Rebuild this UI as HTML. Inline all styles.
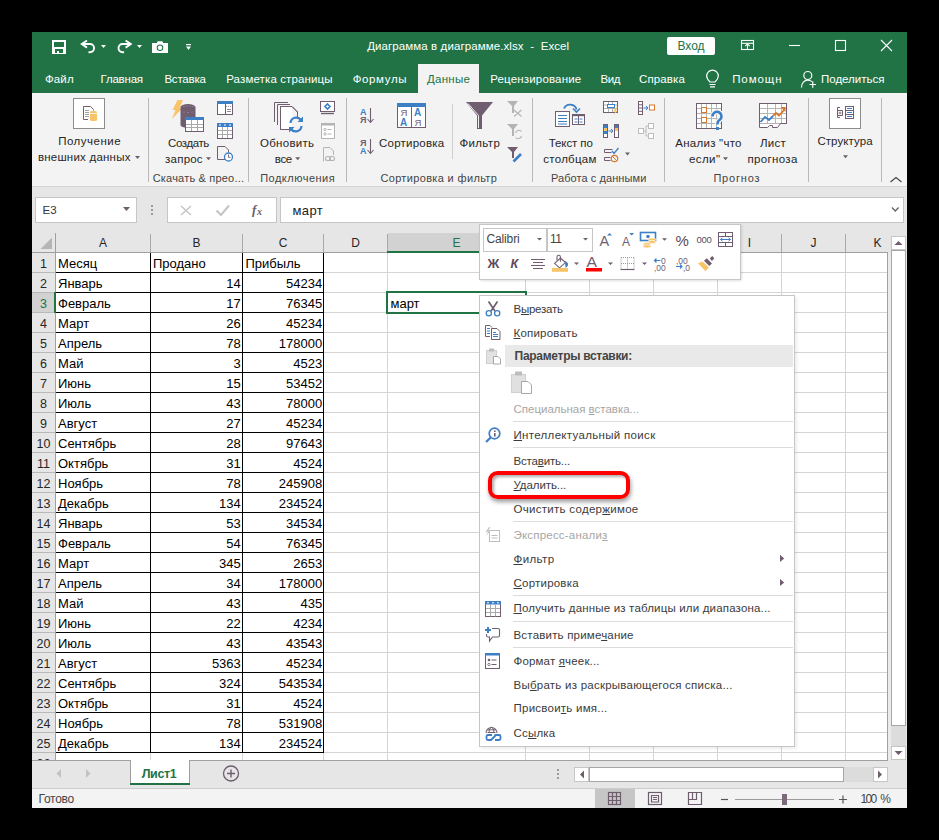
<!DOCTYPE html>
<html><head><meta charset="utf-8">
<style>
*{margin:0;padding:0;box-sizing:border-box}
html,body{width:939px;height:840px;overflow:hidden;background:#000;font-family:"Liberation Sans",sans-serif}
.a{position:absolute}
.t{position:absolute;white-space:nowrap;line-height:1}
svg{position:absolute;overflow:visible}
</style></head><body>
<div class="a" style="left:32px;top:32px;width:875px;height:776px;background:#e6e6e6;"></div>
<div class="a" style="left:32px;top:32px;width:875px;height:61px;background:#217346;"></div>
<svg style="left:0;top:0" width="939" height="100">
<rect x="52" y="40" width="14" height="14" fill="#fff"/>
<rect x="54" y="42" width="10" height="5" fill="#217346"/>
<rect x="55" y="49" width="8" height="4" fill="#217346"/>
<rect x="57" y="51" width="2" height="2" fill="#fff"/>
<g fill="none" stroke="#fff" stroke-width="1.9">
 <path d="M82 44 H90 a4.1 4.1 0 0 1 0 8.2 H88.5"/>
 <path d="M87 40.5 L81.8 44 L87 47.6"/>
 <path d="M130.6 44 H122.6 a4.1 4.1 0 0 0 0 8.2 H124.1"/>
 <path d="M125.6 40.5 L130.8 44 L125.6 47.6"/>
</g>
<g fill="#fff">
 <path d="M101 45 h5 l-2.5 3z"/>
 <path d="M137 45 h5 l-2.5 3z"/>
 <path d="M152 43 h5 l0.5 -1.8 h5 l0.5 1.8 h5 v10 h-16z"/>
 <circle cx="160" cy="47.8" r="3.3" fill="#217346"/>
 <circle cx="160" cy="47.8" r="2.2"/>
 <rect x="186" y="44" width="5" height="1.2"/>
 <path d="M186 46.5 h5 l-2.5 3.5z"/>
</g>
<!-- window controls -->
<g fill="none" stroke="#fff" stroke-width="1.1">
 <rect x="741.5" y="40.5" width="12" height="9"/>
 <path d="M741.5 43.3 h12"/>
 <path d="M747.5 49.5 v-6 M745.2 46.2 l2.3 -2.3 l2.3 2.3"/>
 <path d="M789 45.5 h11"/>
 <rect x="835.5" y="40.5" width="10" height="10"/>
 <path d="M881 40 l11 11 M892 40 l-11 11"/>
</g>
</svg>
<div class="t" style="left:367.2px;top:41.27px;font-size:11.5px;color:#ffffff;font-weight:400;letter-spacing:0.092px;">Диаграмма в диаграмме.xlsx&nbsp; - &nbsp;Excel</div>
<div class="a" style="left:667px;top:36.5px;width:48px;height:18.5px;background:#fff;border-radius:2px"></div>
<div class="t" style="left:491px;width:400px;text-align:center;top:39.84px;font-size:12px;color:#217346;font-weight:400;">Вход</div>
<div class="a" style="left:418px;top:64px;width:61px;height:29px;background:#f3f3f3;"></div>
<div class="t" style="left:45px;top:73.87px;font-size:11.5px;color:#ffffff;font-weight:400;letter-spacing:0.106px;">Файл</div>
<div class="t" style="left:100.5px;top:73.87px;font-size:11.5px;color:#ffffff;font-weight:400;letter-spacing:-0.197px;">Главная</div>
<div class="t" style="left:164.4px;top:73.87px;font-size:11.5px;color:#ffffff;font-weight:400;letter-spacing:-0.192px;">Вставка</div>
<div class="t" style="left:226.2px;top:73.87px;font-size:11.5px;color:#ffffff;font-weight:400;letter-spacing:0.129px;">Разметка страницы</div>
<div class="t" style="left:352.7px;top:73.87px;font-size:11.5px;color:#ffffff;font-weight:400;letter-spacing:0.626px;">Формулы</div>
<div class="t" style="left:490.2px;top:73.87px;font-size:11.5px;color:#ffffff;font-weight:400;letter-spacing:0.168px;">Рецензирование</div>
<div class="t" style="left:600.4px;top:73.87px;font-size:11.5px;color:#ffffff;font-weight:400;letter-spacing:-0.356px;">Вид</div>
<div class="t" style="left:639px;top:73.87px;font-size:11.5px;color:#ffffff;font-weight:400;letter-spacing:0.112px;">Справка</div>
<div class="t" style="left:732.2px;top:73.87px;font-size:11.5px;color:#ffffff;font-weight:400;letter-spacing:0.904px;">Помощн</div>
<div class="t" style="left:821px;top:73.87px;font-size:11.5px;color:#ffffff;font-weight:400;letter-spacing:-0.002px;">Поделиться</div>
<div class="t" style="left:426.9px;top:73.87px;font-size:11.5px;color:#217346;font-weight:400;letter-spacing:0.308px;">Данные</div>
<svg style="left:0;top:0" width="939" height="100">
<g fill="none" stroke="#fff" stroke-width="1.2">
 <path d="M709.5 84.5 h6 M710 86.8 h5 M710 82 c-2.5-2.5-3.3-4-3.3-6 a5.8 5.8 0 0 1 11.6 0 c0 2-0.8 3.5-3.3 6z"/>
 <circle cx="807.8" cy="75.5" r="4"/>
 <path d="M801.5 87.5 c0-4.5 2.8-7.3 6.3-7.3 c1.8 0 3 0.6 4 1.4"/>
 <path d="M809.5 84.5 h6.5 M812.75 81.2 v6.6"/>
</g>
</svg>
<div class="a" style="left:32px;top:93px;width:875px;height:93px;background:#f3f3f3;"></div>
<div class="a" style="left:32px;top:186px;width:875px;height:1px;background:#d4d4d4;"></div>
<div class="a" style="left:148px;top:98px;width:1px;height:84px;background:#b9b9b9;"></div>
<div class="a" style="left:248px;top:98px;width:1px;height:84px;background:#b9b9b9;"></div>
<div class="a" style="left:346px;top:98px;width:1px;height:84px;background:#b9b9b9;"></div>
<div class="a" style="left:532px;top:98px;width:1px;height:84px;background:#b9b9b9;"></div>
<div class="a" style="left:664px;top:98px;width:1px;height:84px;background:#b9b9b9;"></div>
<div class="a" style="left:808px;top:98px;width:1px;height:84px;background:#b9b9b9;"></div>
<div class="a" style="left:881px;top:98px;width:1px;height:84px;background:#b9b9b9;"></div>
<div class="a" style="left:452px;top:104px;width:1px;height:55px;background:#cfcfcf;"></div>
<div class="t" style="left:58.2px;top:136.17px;font-size:11.5px;color:#262626;font-weight:400;letter-spacing:0.495px;">Получение</div>
<div class="t" style="left:37.9px;top:152.17px;font-size:11.5px;color:#262626;font-weight:400;letter-spacing:0.221px;">внешних данных</div>
<div class="t" style="left:168px;top:138.17px;font-size:11.5px;color:#262626;font-weight:400;letter-spacing:-0.403px;">Создать</div>
<div class="t" style="left:165.1px;top:154.17px;font-size:11.5px;color:#262626;font-weight:400;letter-spacing:0.212px;">запрос</div>
<div class="t" style="left:260px;top:137.87px;font-size:11.5px;color:#262626;font-weight:400;letter-spacing:0.275px;">Обновить</div>
<div class="t" style="left:274.8px;top:153.67px;font-size:11.5px;color:#262626;font-weight:400;letter-spacing:-0.370px;">все</div>
<div class="t" style="left:379px;top:137.87px;font-size:11.5px;color:#262626;font-weight:400;letter-spacing:0.231px;">Сортировка</div>
<div class="t" style="left:459.5px;top:137.67px;font-size:11.5px;color:#262626;font-weight:400;letter-spacing:0.332px;">Фильтр</div>
<div class="t" style="left:548.8px;top:137.67px;font-size:11.5px;color:#262626;font-weight:400;letter-spacing:-0.112px;">Текст по</div>
<div class="t" style="left:543.3px;top:153.67px;font-size:11.5px;color:#262626;font-weight:400;letter-spacing:0.269px;">столбцам</div>
<div class="t" style="left:675.3px;top:137.87px;font-size:11.5px;color:#262626;font-weight:400;letter-spacing:0.256px;">Анализ &quot;что</div>
<div class="t" style="left:689px;top:153.67px;font-size:11.5px;color:#262626;font-weight:400;letter-spacing:0.406px;">если&quot;</div>
<div class="t" style="left:760px;top:137.87px;font-size:11.5px;color:#262626;font-weight:400;letter-spacing:0.267px;">Лист</div>
<div class="t" style="left:747.4px;top:153.67px;font-size:11.5px;color:#262626;font-weight:400;letter-spacing:0.357px;">прогноза</div>
<div class="t" style="left:817.4px;top:136.17px;font-size:11.5px;color:#262626;font-weight:400;letter-spacing:0.080px;">Структура</div>
<div class="t" style="left:152.7px;top:173.19px;font-size:11px;color:#444;font-weight:400;letter-spacing:0.195px;">Скачать &amp; прео...</div>
<div class="t" style="left:260.2px;top:173.19px;font-size:11px;color:#444;font-weight:400;letter-spacing:0.491px;">Подключения</div>
<div class="t" style="left:380.4px;top:173.19px;font-size:11px;color:#444;font-weight:400;letter-spacing:0.345px;">Сортировка и фильтр</div>
<div class="t" style="left:550.9px;top:173.19px;font-size:11px;color:#444;font-weight:400;letter-spacing:0.079px;">Работа с данными</div>
<div class="t" style="left:713.4px;top:173.19px;font-size:11px;color:#444;font-weight:400;letter-spacing:0.803px;">Прогноз</div>
<svg style="left:0;top:0" width="939" height="200"><path d="M135 156 h5 l-2.5 3z" fill="#6d5d6d"/><path d="M206 157.3 h5 l-2.5 3z" fill="#6d5d6d"/><path d="M295.2 157.3 h5 l-2.5 3z" fill="#6d5d6d"/><path d="M723 157.3 h5 l-2.5 3z" fill="#6d5d6d"/><path d="M843 155.2 h5 l-2.5 3z" fill="#6d5d6d"/><path d="M625 152.5 h5 l-2.5 3z" fill="#6d5d6d"/><path d="M890.5 182 l5.5 -4.5 l5.5 4.5" fill="none" stroke="#444" stroke-width="1.1"/><rect x="73.5" y="98.5" width="31" height="30" fill="#fff" stroke="#8c8c8c"/><path d="M83.5 119.5 V106.5 H90.5 L93.5 109.5 V110.5" fill="none" stroke="#705e70" stroke-width="1"/><path d="M83.5 119.5 H88" stroke="#705e70"/><g stroke="#a0a0a0" stroke-width="1"><path d="M85 110.5h4M85 112.5h4M85 114.5h4M85 116.5h4"/></g><rect x="90" y="111" width="7" height="10" rx="1.5" fill="#f7c46a"/><path d="M90 113.5 h7" stroke="#fff" stroke-width="0.8"/><path d="M177.5 100 H183 L179.5 108 H182.5 L172 119 L175.5 110 H172.5z" fill="#f7c46a"/><path d="M180.5 107 a7.5 3 0 0 1 15 0 V125 a7.5 3 0 0 1 -15 0z" fill="#705e70"/><g fill="#a99aa9"><circle cx="184" cy="106.5" r="0.6"/><circle cx="187" cy="106" r="0.6"/><circle cx="190" cy="106" r="0.6"/><circle cx="193" cy="106.5" r="0.6"/><circle cx="184" cy="112" r="0.6"/><circle cx="188" cy="112.5" r="0.6"/><circle cx="192" cy="112" r="0.6"/></g><rect x="185.5" y="117.5" width="18" height="14" fill="#fff" stroke="#705e70"/><rect x="185" y="117" width="19" height="3" fill="#3c7fc4"/><path d="M186 124.5 h17 M186 127.5 h17 M191.5 120 v11 M197.5 120 v11" stroke="#a9a9a9" stroke-width="1"/><rect x="217.5" y="101.5" width="15" height="13" fill="#fff" stroke="#705e70"/><rect x="217" y="101" width="16" height="3" fill="#3c7fc4"/><path d="M225.5 104 v10.5 M218 114.5 h7.5" stroke="#705e70"/><path d="M227 109.5 h4 M227 111.5 h4" stroke="#8a8a8a"/><path d="M226 106.5 h6" stroke="#9a9a9a" stroke-dasharray="1 1"/><rect x="217.5" y="123.5" width="15" height="15" fill="#fff" stroke="#705e70"/><rect x="217" y="123" width="16" height="4" fill="#3c7fc4"/><path d="M218 130.5 h14 M218 134.5 h14 M222.5 127 v11 M227.5 127 v11" stroke="#a9a9a9"/><path d="M219 125 h2 M224 125 h2 M229 125 h2" stroke="#fff"/><path d="M226.5 159.5 H217.5 V146.5 H225 L228.5 150 V152" fill="none" stroke="#705e70"/><circle cx="228.5" cy="157" r="4" fill="#fff" stroke="#3c7fc4" stroke-width="1.3"/><path d="M228.5 154.5 v2.8 h2" fill="none" stroke="#705e70" stroke-width="0.9"/><path d="M274.5 122 V102.5 H288 M277.5 125 V104.5 H290 M280.5 129.5 V106.5 H292 L297.5 112 V117" fill="none" stroke="#705e70"/><path d="M280.5 129.5 H289" stroke="#705e70"/><rect x="281" y="107" width="11" height="22" fill="#fff"/><path d="M280.5 129.5 V106.5 H292 L297.5 112 V117 M280.5 129.5 H289" fill="none" stroke="#705e70"/><g fill="none" stroke="#3c7fc4" stroke-width="2.2"><path d="M290.5 123 a5.8 5.8 0 0 1 10.5 -3"/><path d="M301.5 126 a5.8 5.8 0 0 1 -10.5 3"/></g><path d="M303 116.5 v5.5 h-5.5z M289 132.5 v-5.5 h5.5z" fill="#3c7fc4"/><rect x="320.5" y="101.5" width="14" height="10" fill="#fff" stroke="#705e70"/><path d="M321 113.5 h13" stroke="#705e70" stroke-width="1.4"/><path d="M327.5 104 l2.5 2.5 l-2.5 2.5 l-2.5 -2.5z" fill="none" stroke="#3c7fc4" stroke-width="1.6"/><rect x="321.5" y="123.5" width="13" height="15" fill="#fff" stroke="#b4b4b4"/><rect x="321" y="123" width="14" height="2.5" fill="#b4b4b4"/><g stroke="#b4b4b4" fill="none"><circle cx="325" cy="129.5" r="1.2"/><circle cx="325" cy="134" r="1.2"/><path d="M327.5 129.5h4 M327.5 134h4"/></g><path d="M323.5 161.5 V147.5 H330 L333.5 151 V155" fill="none" stroke="#b4b4b4"/><rect x="325.5" y="156.5" width="5" height="4" rx="2" fill="#f3f3f3" stroke="#b4b4b4" stroke-width="1.1"/><rect x="329.5" y="156.5" width="5" height="4" rx="2" fill="none" stroke="#b4b4b4" stroke-width="1.1"/><text x="360" y="115" font-family="Liberation Sans" font-weight="700" font-size="9" fill="#3c7fc4">A</text><text x="360" y="122.5" font-family="Liberation Sans" font-weight="700" font-size="9" fill="#705e70">Я</text><path d="M370.5 108 v14.5 M367.5 119 l3 3.5 l3 -3.5" fill="none" stroke="#705e70" stroke-width="1.1"/><text x="360" y="146" font-family="Liberation Sans" font-weight="700" font-size="9" fill="#705e70">Я</text><text x="360" y="153.5" font-family="Liberation Sans" font-weight="700" font-size="9" fill="#3c7fc4">A</text><path d="M370.5 139 v14.5 M367.5 150 l3 3.5 l3 -3.5" fill="none" stroke="#705e70" stroke-width="1.1"/><rect x="397.5" y="103.5" width="28" height="24" fill="#fff" stroke="#705e70"/><rect x="397" y="103" width="29" height="4" fill="#3c7fc4"/><path d="M411.5 107 v20.5" stroke="#705e70"/><text x="400.5" y="116" font-family="Liberation Sans" font-size="9.5" fill="#705e70">Я</text><text x="400" y="126" font-family="Liberation Sans" font-weight="700" font-size="10" fill="#3c7fc4">A</text><text x="414" y="116" font-family="Liberation Sans" font-weight="700" font-size="10" fill="#3c7fc4">A</text><text x="414.5" y="126" font-family="Liberation Sans" font-size="9.5" fill="#705e70">Я</text><path d="M466 102 H493 L482 115.5 V129 H477 V115.5z" fill="#705e70"/><path d="M468 103.5 L478.5 115.5 V128" fill="none" stroke="#fff" stroke-width="0.9"/><path d="M507 101 H518 L514 106 V113 H512 V106z" fill="#b4b4b4"/><path d="M514 110 l7.5 6.5 M521.5 110 l-7.5 6.5" stroke="#b4b4b4" stroke-width="1.1"/><path d="M507 124 H518 L514 129 V136 H512 V129z" fill="#b4b4b4"/><path d="M515.5 133 a3.5 3.5 0 0 1 6 -1.5 M521.5 136 a3.5 3.5 0 0 1 -6 1.5" fill="none" stroke="#b4b4b4" stroke-width="1.1"/><path d="M507 147 H518 L514 152 V158 H512 V152z" fill="#705e70"/><path d="M513.5 161.5 L521 154" stroke="#3c7fc4" stroke-width="2.6"/><rect x="555.5" y="111.5" width="14" height="15" fill="#fff" stroke="#705e70"/><path d="M558 115.5h9 M558 118.5h9 M558 121.5h9 M558 124h9" stroke="#3c7fc4"/><rect x="572.5" y="114.5" width="12" height="10" fill="#fff" stroke="#705e70"/><rect x="572" y="114" width="13" height="2.2" fill="#705e70"/><path d="M574.5 119h3 M579.5 119h3 M574.5 122h3 M579.5 122h3" stroke="#3c7fc4"/><path d="M578.5 116 v8.5" stroke="#705e70"/><path d="M564 108.5 a6.5 6 0 0 1 12.5 1" fill="none" stroke="#3c7fc4" stroke-width="1.8"/><path d="M573 108.5 l3.5 3.5 l3.5 -3.5" fill="none" stroke="#3c7fc4" stroke-width="1.6"/><rect x="603.5" y="101.5" width="14" height="11" fill="#fff" stroke="#705e70"/><path d="M604 105h13 M604 108.5h13 M608.5 102v10 M612.5 102v10" stroke="#b0b0b0"/><rect x="607.5" y="104.5" width="7" height="3" fill="#fff" stroke="#3c7fc4"/><path d="M616 107 l-3 4.5 h2.5 l-2.5 4 l5 -5 h-2.5 l2.5 -3.5z" fill="#f7c46a"/><rect x="603.5" y="124.5" width="4" height="13" fill="#fff" stroke="#705e70"/><rect x="614.5" y="124.5" width="4" height="13" fill="#fff" stroke="#705e70"/><rect x="604" y="125" width="3" height="3" fill="#3c7fc4"/><rect x="604" y="128" width="3" height="3" fill="#f7c46a"/><rect x="604" y="131" width="3" height="3" fill="#3c7fc4"/><rect x="615" y="125" width="3" height="3" fill="#3c7fc4"/><rect x="615" y="128" width="3" height="3" fill="#f7c46a"/><path d="M608.5 131 h4 M611 129 l2 2 l-2 2" fill="none" stroke="#3c7fc4"/><path d="M604.5 149.5 h8 M604.5 152.5 h7 M604.5 157.5 h6 M604.5 160.5 h6" stroke="#705e70"/><path d="M604.5 149.5 v3 M604.5 157.5 v3" stroke="#705e70"/><path d="M612 151 l2 2.5 l4.5 -5.5" fill="none" stroke="#3c7fc4" stroke-width="1.3"/><circle cx="614.5" cy="158.5" r="3.2" fill="none" stroke="#d9782c" stroke-width="1.2"/><path d="M612.5 156.5 l4 4" stroke="#d9782c"/><rect x="638.5" y="101.5" width="4" height="13" fill="#fff" stroke="#705e70"/><path d="M639 104.8h3 M639 108h3 M639 111.3h3" stroke="#705e70"/><path d="M643.5 108 h4 M646 106 l2 2 l-2 2" fill="none" stroke="#3c7fc4"/><rect x="649.5" y="105" width="5" height="5" fill="#fff" stroke="#d9782c"/><g fill="#fff" stroke="#bdbdbd"><rect x="638.5" y="128.5" width="5" height="5"/><rect x="648.5" y="123.5" width="5" height="5"/><rect x="648.5" y="133.5" width="5" height="5"/></g><path d="M643.5 131 h2.5 v-5 h2.5 M646 131 v5 h2.5" fill="none" stroke="#bdbdbd"/><rect x="696.5" y="103.5" width="25" height="25" fill="#fff" stroke="#705e70"/><path d="M697 108.5h24 M697 113.5h24 M697 118.5h24 M697 123.5h24 M701.5 104v24 M706.5 104v24 M711.5 104v24 M716.5 104v24" stroke="#b5b5b5"/><rect x="701.5" y="107.5" width="5" height="5" fill="#fff" stroke="#d9782c"/><rect x="701.5" y="117.5" width="5" height="5" fill="#fff" stroke="#d9782c"/><path d="M712.5 116.5 a4.5 4.5 0 1 1 7 3.5 c-1.5 1 -2 2 -2 3.5 v1" fill="none" stroke="#f3f3f3" stroke-width="5"/><path d="M712.5 116.5 a4.5 4.5 0 1 1 7 3.5 c-1.5 1 -2 2 -2 3.5 v1" fill="none" stroke="#3c7fc4" stroke-width="2.6"/><rect x="716" y="127" width="3" height="3" fill="#3c7fc4"/><rect x="759.5" y="103.5" width="27" height="20" fill="#fff" stroke="#705e70"/><path d="M760 108.5h26 M760 113.5h26 M760 118.5h26 M767.5 104v19 M775.5 104v19 M781.5 104v19" stroke="#b5b5b5"/><path d="M759.5 123.5 v4 h8 l2 -2 h3 v2 h5 l3 -4" fill="#fff" stroke="#705e70"/><path d="M760.5 122 l4.5 -5 l4 3 l4 -4" fill="none" stroke="#3c7fc4" stroke-width="1.8"/><path d="M773 116 l3 -3 l3 2.5 l5.5 -6" fill="none" stroke="#d9782c" stroke-width="1.8"/><path d="M780.5 107 h5 v5z" fill="#d9782c"/><rect x="829.5" y="98.5" width="31" height="30" fill="#fff" stroke="#8c8c8c"/><path d="M840 107.5 h-2.5 v10 h2.5 M837.5 110.5 h5 v5 h-5" fill="none" stroke="#705e70"/><path d="M838.5 113 h3 M840 111.5 v3" stroke="#705e70" stroke-width="0.8"/><rect x="845.5" y="106.5" width="8" height="12" fill="#fff" stroke="#705e70"/><path d="M846 110.5h7 M846 114.5h7" stroke="#705e70"/><path d="M847 108.5h5 M847 112.5h5 M847 116.5h5" stroke="#3c7fc4"/></svg>
<div class="a" style="left:35px;top:197px;width:102px;height:26px;background:#fff;border:1px solid #c6c6c6"></div>
<div class="t" style="left:42.6px;top:204.97px;font-size:11.5px;color:#333;font-weight:400;">E3</div>
<svg style="left:0;top:0" width="939" height="300"><path d="M123 207 h7 l-3.5 4z" fill="#6d5d6d"/><g fill="#9a9a9a"><rect x="151" y="205" width="2" height="2"/><rect x="151" y="209" width="2" height="2"/><rect x="151" y="213" width="2" height="2"/></g></svg>
<div class="a" style="left:167px;top:197px;width:110px;height:26px;background:#fff;border:1px solid #c6c6c6"></div>
<div class="a" style="left:280px;top:197px;width:624px;height:26px;background:#fff;border:1px solid #c6c6c6"></div>
<div class="t" style="left:292.5px;top:204.00px;font-size:13px;color:#222;font-weight:400;letter-spacing:0.407px;">март</div>
<svg style="left:0;top:0" width="939" height="300"><path d="M181 206 l10 9 M191 206 l-10 9" stroke="#c4c4c4" stroke-width="1.4"/><path d="M216.5 210.5 l4.5 4.5 l8 -9.5" fill="none" stroke="#c4c4c4" stroke-width="2"/><text x="252" y="214" font-family="Liberation Serif" font-style="italic" font-weight="700" font-size="13" fill="#6d5d6d">f</text><text x="257" y="214.5" font-family="Liberation Serif" font-style="italic" font-weight="700" font-size="10" fill="#6d5d6d">x</text></svg>
<svg style="left:0;top:0" width="939" height="300"><path d="M892 207.5 l3.3 3.5 l3.3 -3.5" fill="none" stroke="#6d5d6d" stroke-width="1.3"/></svg>
<div class="a" style="left:32px;top:233px;width:856px;height:20px;background:#e6e6e6;"></div>
<div class="a" style="left:32px;top:253px;width:23px;height:507px;background:#e6e6e6;"></div>
<div class="a" style="left:56px;top:253px;width:831px;height:507px;background:#fff;"></div>
<div class="a" style="left:388px;top:233px;width:137px;height:19px;background:#d2d2d2;"></div>
<div class="a" style="left:32px;top:293px;width:23px;height:19px;background:#d2d2d2;"></div>
<svg style="left:0;top:0" width="939" height="840"><path d="M52 237.5 V249 H40.5z" fill="#b5b5b5"/></svg>
<div class="a" style="left:56px;top:272px;width:831px;height:1px;background:#d4d4d4;"></div>
<div class="a" style="left:32px;top:272px;width:23px;height:1px;background:#b8b8b8;"></div>
<div class="a" style="left:56px;top:292px;width:831px;height:1px;background:#d4d4d4;"></div>
<div class="a" style="left:32px;top:292px;width:23px;height:1px;background:#b8b8b8;"></div>
<div class="a" style="left:56px;top:312px;width:831px;height:1px;background:#d4d4d4;"></div>
<div class="a" style="left:32px;top:312px;width:23px;height:1px;background:#b8b8b8;"></div>
<div class="a" style="left:56px;top:332px;width:831px;height:1px;background:#d4d4d4;"></div>
<div class="a" style="left:32px;top:332px;width:23px;height:1px;background:#b8b8b8;"></div>
<div class="a" style="left:56px;top:352px;width:831px;height:1px;background:#d4d4d4;"></div>
<div class="a" style="left:32px;top:352px;width:23px;height:1px;background:#b8b8b8;"></div>
<div class="a" style="left:56px;top:372px;width:831px;height:1px;background:#d4d4d4;"></div>
<div class="a" style="left:32px;top:372px;width:23px;height:1px;background:#b8b8b8;"></div>
<div class="a" style="left:56px;top:392px;width:831px;height:1px;background:#d4d4d4;"></div>
<div class="a" style="left:32px;top:392px;width:23px;height:1px;background:#b8b8b8;"></div>
<div class="a" style="left:56px;top:412px;width:831px;height:1px;background:#d4d4d4;"></div>
<div class="a" style="left:32px;top:412px;width:23px;height:1px;background:#b8b8b8;"></div>
<div class="a" style="left:56px;top:432px;width:831px;height:1px;background:#d4d4d4;"></div>
<div class="a" style="left:32px;top:432px;width:23px;height:1px;background:#b8b8b8;"></div>
<div class="a" style="left:56px;top:452px;width:831px;height:1px;background:#d4d4d4;"></div>
<div class="a" style="left:32px;top:452px;width:23px;height:1px;background:#b8b8b8;"></div>
<div class="a" style="left:56px;top:472px;width:831px;height:1px;background:#d4d4d4;"></div>
<div class="a" style="left:32px;top:472px;width:23px;height:1px;background:#b8b8b8;"></div>
<div class="a" style="left:56px;top:492px;width:831px;height:1px;background:#d4d4d4;"></div>
<div class="a" style="left:32px;top:492px;width:23px;height:1px;background:#b8b8b8;"></div>
<div class="a" style="left:56px;top:512px;width:831px;height:1px;background:#d4d4d4;"></div>
<div class="a" style="left:32px;top:512px;width:23px;height:1px;background:#b8b8b8;"></div>
<div class="a" style="left:56px;top:532px;width:831px;height:1px;background:#d4d4d4;"></div>
<div class="a" style="left:32px;top:532px;width:23px;height:1px;background:#b8b8b8;"></div>
<div class="a" style="left:56px;top:552px;width:831px;height:1px;background:#d4d4d4;"></div>
<div class="a" style="left:32px;top:552px;width:23px;height:1px;background:#b8b8b8;"></div>
<div class="a" style="left:56px;top:572px;width:831px;height:1px;background:#d4d4d4;"></div>
<div class="a" style="left:32px;top:572px;width:23px;height:1px;background:#b8b8b8;"></div>
<div class="a" style="left:56px;top:592px;width:831px;height:1px;background:#d4d4d4;"></div>
<div class="a" style="left:32px;top:592px;width:23px;height:1px;background:#b8b8b8;"></div>
<div class="a" style="left:56px;top:612px;width:831px;height:1px;background:#d4d4d4;"></div>
<div class="a" style="left:32px;top:612px;width:23px;height:1px;background:#b8b8b8;"></div>
<div class="a" style="left:56px;top:632px;width:831px;height:1px;background:#d4d4d4;"></div>
<div class="a" style="left:32px;top:632px;width:23px;height:1px;background:#b8b8b8;"></div>
<div class="a" style="left:56px;top:652px;width:831px;height:1px;background:#d4d4d4;"></div>
<div class="a" style="left:32px;top:652px;width:23px;height:1px;background:#b8b8b8;"></div>
<div class="a" style="left:56px;top:672px;width:831px;height:1px;background:#d4d4d4;"></div>
<div class="a" style="left:32px;top:672px;width:23px;height:1px;background:#b8b8b8;"></div>
<div class="a" style="left:56px;top:692px;width:831px;height:1px;background:#d4d4d4;"></div>
<div class="a" style="left:32px;top:692px;width:23px;height:1px;background:#b8b8b8;"></div>
<div class="a" style="left:56px;top:712px;width:831px;height:1px;background:#d4d4d4;"></div>
<div class="a" style="left:32px;top:712px;width:23px;height:1px;background:#b8b8b8;"></div>
<div class="a" style="left:56px;top:732px;width:831px;height:1px;background:#d4d4d4;"></div>
<div class="a" style="left:32px;top:732px;width:23px;height:1px;background:#b8b8b8;"></div>
<div class="a" style="left:56px;top:752px;width:831px;height:1px;background:#d4d4d4;"></div>
<div class="a" style="left:32px;top:752px;width:23px;height:1px;background:#b8b8b8;"></div>
<div class="a" style="left:150px;top:253px;width:1px;height:507px;background:#d4d4d4;"></div>
<div class="a" style="left:150px;top:234px;width:1px;height:18px;background:#a9a9a9;"></div>
<div class="a" style="left:242px;top:253px;width:1px;height:507px;background:#d4d4d4;"></div>
<div class="a" style="left:242px;top:234px;width:1px;height:18px;background:#a9a9a9;"></div>
<div class="a" style="left:323px;top:253px;width:1px;height:507px;background:#d4d4d4;"></div>
<div class="a" style="left:323px;top:234px;width:1px;height:18px;background:#a9a9a9;"></div>
<div class="a" style="left:387px;top:253px;width:1px;height:507px;background:#d4d4d4;"></div>
<div class="a" style="left:387px;top:234px;width:1px;height:18px;background:#a9a9a9;"></div>
<div class="a" style="left:525px;top:253px;width:1px;height:507px;background:#d4d4d4;"></div>
<div class="a" style="left:525px;top:234px;width:1px;height:18px;background:#a9a9a9;"></div>
<div class="a" style="left:589px;top:253px;width:1px;height:507px;background:#d4d4d4;"></div>
<div class="a" style="left:589px;top:234px;width:1px;height:18px;background:#a9a9a9;"></div>
<div class="a" style="left:653px;top:253px;width:1px;height:507px;background:#d4d4d4;"></div>
<div class="a" style="left:653px;top:234px;width:1px;height:18px;background:#a9a9a9;"></div>
<div class="a" style="left:717px;top:253px;width:1px;height:507px;background:#d4d4d4;"></div>
<div class="a" style="left:717px;top:234px;width:1px;height:18px;background:#a9a9a9;"></div>
<div class="a" style="left:781px;top:253px;width:1px;height:507px;background:#d4d4d4;"></div>
<div class="a" style="left:781px;top:234px;width:1px;height:18px;background:#a9a9a9;"></div>
<div class="a" style="left:845px;top:253px;width:1px;height:507px;background:#d4d4d4;"></div>
<div class="a" style="left:845px;top:234px;width:1px;height:18px;background:#a9a9a9;"></div>
<div class="a" style="left:32px;top:252px;width:856px;height:1px;background:#9f9f9f;"></div>
<div class="a" style="left:55px;top:233px;width:1px;height:527px;background:#a0a0a0;"></div>
<div class="a" style="left:887px;top:252px;width:1px;height:508px;background:#a0a0a0;"></div>
<div class="a" style="left:387px;top:251px;width:139px;height:2px;background:#217346;"></div>
<div class="a" style="left:54px;top:292px;width:2px;height:21px;background:#217346;"></div>
<div class="a" style="left:56px;top:272px;width:268px;height:1px;background:#000;"></div>
<div class="a" style="left:56px;top:292px;width:268px;height:1px;background:#000;"></div>
<div class="a" style="left:56px;top:312px;width:268px;height:1px;background:#000;"></div>
<div class="a" style="left:56px;top:332px;width:268px;height:1px;background:#000;"></div>
<div class="a" style="left:56px;top:352px;width:268px;height:1px;background:#000;"></div>
<div class="a" style="left:56px;top:372px;width:268px;height:1px;background:#000;"></div>
<div class="a" style="left:56px;top:392px;width:268px;height:1px;background:#000;"></div>
<div class="a" style="left:56px;top:412px;width:268px;height:1px;background:#000;"></div>
<div class="a" style="left:56px;top:432px;width:268px;height:1px;background:#000;"></div>
<div class="a" style="left:56px;top:452px;width:268px;height:1px;background:#000;"></div>
<div class="a" style="left:56px;top:472px;width:268px;height:1px;background:#000;"></div>
<div class="a" style="left:56px;top:492px;width:268px;height:1px;background:#000;"></div>
<div class="a" style="left:56px;top:512px;width:268px;height:1px;background:#000;"></div>
<div class="a" style="left:56px;top:532px;width:268px;height:1px;background:#000;"></div>
<div class="a" style="left:56px;top:552px;width:268px;height:1px;background:#000;"></div>
<div class="a" style="left:56px;top:572px;width:268px;height:1px;background:#000;"></div>
<div class="a" style="left:56px;top:592px;width:268px;height:1px;background:#000;"></div>
<div class="a" style="left:56px;top:612px;width:268px;height:1px;background:#000;"></div>
<div class="a" style="left:56px;top:632px;width:268px;height:1px;background:#000;"></div>
<div class="a" style="left:56px;top:652px;width:268px;height:1px;background:#000;"></div>
<div class="a" style="left:56px;top:672px;width:268px;height:1px;background:#000;"></div>
<div class="a" style="left:56px;top:692px;width:268px;height:1px;background:#000;"></div>
<div class="a" style="left:56px;top:712px;width:268px;height:1px;background:#000;"></div>
<div class="a" style="left:56px;top:732px;width:268px;height:1px;background:#000;"></div>
<div class="a" style="left:56px;top:752px;width:268px;height:1px;background:#000;"></div>
<div class="a" style="left:150px;top:253px;width:1px;height:500px;background:#000;"></div>
<div class="a" style="left:242px;top:253px;width:1px;height:500px;background:#000;"></div>
<div class="a" style="left:323px;top:253px;width:1px;height:500px;background:#000;"></div>
<div class="t" style="left:-97.0px;width:400px;text-align:center;top:237.34px;font-size:12px;color:#262626;font-weight:400;">A</div>
<div class="t" style="left:-3.5px;width:400px;text-align:center;top:237.34px;font-size:12px;color:#262626;font-weight:400;">B</div>
<div class="t" style="left:83.0px;width:400px;text-align:center;top:237.34px;font-size:12px;color:#262626;font-weight:400;">C</div>
<div class="t" style="left:155.5px;width:400px;text-align:center;top:237.34px;font-size:12px;color:#262626;font-weight:400;">D</div>
<div class="t" style="left:256.5px;width:400px;text-align:center;top:237.34px;font-size:12px;color:#217346;font-weight:400;">E</div>
<div class="t" style="left:357.5px;width:400px;text-align:center;top:237.34px;font-size:12px;color:#262626;font-weight:400;">F</div>
<div class="t" style="left:421.5px;width:400px;text-align:center;top:237.34px;font-size:12px;color:#262626;font-weight:400;">G</div>
<div class="t" style="left:485.5px;width:400px;text-align:center;top:237.34px;font-size:12px;color:#262626;font-weight:400;">H</div>
<div class="t" style="left:549.5px;width:400px;text-align:center;top:237.34px;font-size:12px;color:#262626;font-weight:400;">I</div>
<div class="t" style="left:613.5px;width:400px;text-align:center;top:237.34px;font-size:12px;color:#262626;font-weight:400;">J</div>
<div class="t" style="left:677.5px;width:400px;text-align:center;top:237.34px;font-size:12px;color:#262626;font-weight:400;">K</div>
<div class="t" style="left:-156.5px;width:400px;text-align:center;top:257.62px;font-size:12.5px;color:#262626;font-weight:400;">1</div>
<div class="t" style="left:-156.5px;width:400px;text-align:center;top:277.62px;font-size:12.5px;color:#262626;font-weight:400;">2</div>
<div class="t" style="left:-156.5px;width:400px;text-align:center;top:297.62px;font-size:12.5px;color:#217346;font-weight:400;">3</div>
<div class="t" style="left:-156.5px;width:400px;text-align:center;top:317.62px;font-size:12.5px;color:#262626;font-weight:400;">4</div>
<div class="t" style="left:-156.5px;width:400px;text-align:center;top:337.62px;font-size:12.5px;color:#262626;font-weight:400;">5</div>
<div class="t" style="left:-156.5px;width:400px;text-align:center;top:357.62px;font-size:12.5px;color:#262626;font-weight:400;">6</div>
<div class="t" style="left:-156.5px;width:400px;text-align:center;top:377.62px;font-size:12.5px;color:#262626;font-weight:400;">7</div>
<div class="t" style="left:-156.5px;width:400px;text-align:center;top:397.62px;font-size:12.5px;color:#262626;font-weight:400;">8</div>
<div class="t" style="left:-156.5px;width:400px;text-align:center;top:417.62px;font-size:12.5px;color:#262626;font-weight:400;">9</div>
<div class="t" style="left:-156.5px;width:400px;text-align:center;top:437.62px;font-size:12.5px;color:#262626;font-weight:400;">10</div>
<div class="t" style="left:-156.5px;width:400px;text-align:center;top:457.62px;font-size:12.5px;color:#262626;font-weight:400;">11</div>
<div class="t" style="left:-156.5px;width:400px;text-align:center;top:477.62px;font-size:12.5px;color:#262626;font-weight:400;">12</div>
<div class="t" style="left:-156.5px;width:400px;text-align:center;top:497.62px;font-size:12.5px;color:#262626;font-weight:400;">13</div>
<div class="t" style="left:-156.5px;width:400px;text-align:center;top:517.62px;font-size:12.5px;color:#262626;font-weight:400;">14</div>
<div class="t" style="left:-156.5px;width:400px;text-align:center;top:537.62px;font-size:12.5px;color:#262626;font-weight:400;">15</div>
<div class="t" style="left:-156.5px;width:400px;text-align:center;top:557.62px;font-size:12.5px;color:#262626;font-weight:400;">16</div>
<div class="t" style="left:-156.5px;width:400px;text-align:center;top:577.62px;font-size:12.5px;color:#262626;font-weight:400;">17</div>
<div class="t" style="left:-156.5px;width:400px;text-align:center;top:597.62px;font-size:12.5px;color:#262626;font-weight:400;">18</div>
<div class="t" style="left:-156.5px;width:400px;text-align:center;top:617.62px;font-size:12.5px;color:#262626;font-weight:400;">19</div>
<div class="t" style="left:-156.5px;width:400px;text-align:center;top:637.62px;font-size:12.5px;color:#262626;font-weight:400;">20</div>
<div class="t" style="left:-156.5px;width:400px;text-align:center;top:657.62px;font-size:12.5px;color:#262626;font-weight:400;">21</div>
<div class="t" style="left:-156.5px;width:400px;text-align:center;top:677.62px;font-size:12.5px;color:#262626;font-weight:400;">22</div>
<div class="t" style="left:-156.5px;width:400px;text-align:center;top:697.62px;font-size:12.5px;color:#262626;font-weight:400;">23</div>
<div class="t" style="left:-156.5px;width:400px;text-align:center;top:717.62px;font-size:12.5px;color:#262626;font-weight:400;">24</div>
<div class="t" style="left:-156.5px;width:400px;text-align:center;top:737.62px;font-size:12.5px;color:#262626;font-weight:400;">25</div>
<div class="t" style="left:-156.5px;width:400px;text-align:center;top:757.62px;font-size:12.5px;color:#262626;font-weight:400;">26</div>
<div class="t" style="left:58px;top:256.50px;font-size:13px;color:#000;font-weight:400;">Месяц</div>
<div class="t" style="left:153px;top:256.50px;font-size:13px;color:#000;font-weight:400;">Продано</div>
<div class="t" style="left:245.5px;top:256.50px;font-size:13px;color:#000;font-weight:400;">Прибыль</div>
<div class="t" style="left:58px;top:276.50px;font-size:13px;color:#000;font-weight:400;">Январь</div>
<div class="t" style="right:698.2px;top:276.50px;font-size:13px;color:#000;font-weight:400;">14</div>
<div class="t" style="right:616.8px;top:276.50px;font-size:13px;color:#000;font-weight:400;">54234</div>
<div class="t" style="left:58px;top:296.50px;font-size:13px;color:#000;font-weight:400;">Февраль</div>
<div class="t" style="right:698.2px;top:296.50px;font-size:13px;color:#000;font-weight:400;">17</div>
<div class="t" style="right:616.8px;top:296.50px;font-size:13px;color:#000;font-weight:400;">76345</div>
<div class="t" style="left:58px;top:316.50px;font-size:13px;color:#000;font-weight:400;">Март</div>
<div class="t" style="right:698.2px;top:316.50px;font-size:13px;color:#000;font-weight:400;">26</div>
<div class="t" style="right:616.8px;top:316.50px;font-size:13px;color:#000;font-weight:400;">45234</div>
<div class="t" style="left:58px;top:336.50px;font-size:13px;color:#000;font-weight:400;">Апрель</div>
<div class="t" style="right:698.2px;top:336.50px;font-size:13px;color:#000;font-weight:400;">78</div>
<div class="t" style="right:616.8px;top:336.50px;font-size:13px;color:#000;font-weight:400;">178000</div>
<div class="t" style="left:58px;top:356.50px;font-size:13px;color:#000;font-weight:400;">Май</div>
<div class="t" style="right:698.2px;top:356.50px;font-size:13px;color:#000;font-weight:400;">3</div>
<div class="t" style="right:616.8px;top:356.50px;font-size:13px;color:#000;font-weight:400;">4523</div>
<div class="t" style="left:58px;top:376.50px;font-size:13px;color:#000;font-weight:400;">Июнь</div>
<div class="t" style="right:698.2px;top:376.50px;font-size:13px;color:#000;font-weight:400;">15</div>
<div class="t" style="right:616.8px;top:376.50px;font-size:13px;color:#000;font-weight:400;">53452</div>
<div class="t" style="left:58px;top:396.50px;font-size:13px;color:#000;font-weight:400;">Июль</div>
<div class="t" style="right:698.2px;top:396.50px;font-size:13px;color:#000;font-weight:400;">43</div>
<div class="t" style="right:616.8px;top:396.50px;font-size:13px;color:#000;font-weight:400;">78000</div>
<div class="t" style="left:58px;top:416.50px;font-size:13px;color:#000;font-weight:400;">Август</div>
<div class="t" style="right:698.2px;top:416.50px;font-size:13px;color:#000;font-weight:400;">27</div>
<div class="t" style="right:616.8px;top:416.50px;font-size:13px;color:#000;font-weight:400;">45234</div>
<div class="t" style="left:58px;top:436.50px;font-size:13px;color:#000;font-weight:400;">Сентябрь</div>
<div class="t" style="right:698.2px;top:436.50px;font-size:13px;color:#000;font-weight:400;">28</div>
<div class="t" style="right:616.8px;top:436.50px;font-size:13px;color:#000;font-weight:400;">97643</div>
<div class="t" style="left:58px;top:456.50px;font-size:13px;color:#000;font-weight:400;">Октябрь</div>
<div class="t" style="right:698.2px;top:456.50px;font-size:13px;color:#000;font-weight:400;">31</div>
<div class="t" style="right:616.8px;top:456.50px;font-size:13px;color:#000;font-weight:400;">4524</div>
<div class="t" style="left:58px;top:476.50px;font-size:13px;color:#000;font-weight:400;">Ноябрь</div>
<div class="t" style="right:698.2px;top:476.50px;font-size:13px;color:#000;font-weight:400;">78</div>
<div class="t" style="right:616.8px;top:476.50px;font-size:13px;color:#000;font-weight:400;">245908</div>
<div class="t" style="left:58px;top:496.50px;font-size:13px;color:#000;font-weight:400;">Декабрь</div>
<div class="t" style="right:698.2px;top:496.50px;font-size:13px;color:#000;font-weight:400;">134</div>
<div class="t" style="right:616.8px;top:496.50px;font-size:13px;color:#000;font-weight:400;">234524</div>
<div class="t" style="left:58px;top:516.50px;font-size:13px;color:#000;font-weight:400;">Январь</div>
<div class="t" style="right:698.2px;top:516.50px;font-size:13px;color:#000;font-weight:400;">53</div>
<div class="t" style="right:616.8px;top:516.50px;font-size:13px;color:#000;font-weight:400;">34534</div>
<div class="t" style="left:58px;top:536.50px;font-size:13px;color:#000;font-weight:400;">Февраль</div>
<div class="t" style="right:698.2px;top:536.50px;font-size:13px;color:#000;font-weight:400;">54</div>
<div class="t" style="right:616.8px;top:536.50px;font-size:13px;color:#000;font-weight:400;">76345</div>
<div class="t" style="left:58px;top:556.50px;font-size:13px;color:#000;font-weight:400;">Март</div>
<div class="t" style="right:698.2px;top:556.50px;font-size:13px;color:#000;font-weight:400;">345</div>
<div class="t" style="right:616.8px;top:556.50px;font-size:13px;color:#000;font-weight:400;">2653</div>
<div class="t" style="left:58px;top:576.50px;font-size:13px;color:#000;font-weight:400;">Апрель</div>
<div class="t" style="right:698.2px;top:576.50px;font-size:13px;color:#000;font-weight:400;">34</div>
<div class="t" style="right:616.8px;top:576.50px;font-size:13px;color:#000;font-weight:400;">178000</div>
<div class="t" style="left:58px;top:596.50px;font-size:13px;color:#000;font-weight:400;">Май</div>
<div class="t" style="right:698.2px;top:596.50px;font-size:13px;color:#000;font-weight:400;">43</div>
<div class="t" style="right:616.8px;top:596.50px;font-size:13px;color:#000;font-weight:400;">435</div>
<div class="t" style="left:58px;top:616.50px;font-size:13px;color:#000;font-weight:400;">Июнь</div>
<div class="t" style="right:698.2px;top:616.50px;font-size:13px;color:#000;font-weight:400;">22</div>
<div class="t" style="right:616.8px;top:616.50px;font-size:13px;color:#000;font-weight:400;">4234</div>
<div class="t" style="left:58px;top:636.50px;font-size:13px;color:#000;font-weight:400;">Июль</div>
<div class="t" style="right:698.2px;top:636.50px;font-size:13px;color:#000;font-weight:400;">43</div>
<div class="t" style="right:616.8px;top:636.50px;font-size:13px;color:#000;font-weight:400;">43543</div>
<div class="t" style="left:58px;top:656.50px;font-size:13px;color:#000;font-weight:400;">Август</div>
<div class="t" style="right:698.2px;top:656.50px;font-size:13px;color:#000;font-weight:400;">5363</div>
<div class="t" style="right:616.8px;top:656.50px;font-size:13px;color:#000;font-weight:400;">45234</div>
<div class="t" style="left:58px;top:676.50px;font-size:13px;color:#000;font-weight:400;">Сентябрь</div>
<div class="t" style="right:698.2px;top:676.50px;font-size:13px;color:#000;font-weight:400;">324</div>
<div class="t" style="right:616.8px;top:676.50px;font-size:13px;color:#000;font-weight:400;">543534</div>
<div class="t" style="left:58px;top:696.50px;font-size:13px;color:#000;font-weight:400;">Октябрь</div>
<div class="t" style="right:698.2px;top:696.50px;font-size:13px;color:#000;font-weight:400;">31</div>
<div class="t" style="right:616.8px;top:696.50px;font-size:13px;color:#000;font-weight:400;">4524</div>
<div class="t" style="left:58px;top:716.50px;font-size:13px;color:#000;font-weight:400;">Ноябрь</div>
<div class="t" style="right:698.2px;top:716.50px;font-size:13px;color:#000;font-weight:400;">78</div>
<div class="t" style="right:616.8px;top:716.50px;font-size:13px;color:#000;font-weight:400;">531908</div>
<div class="t" style="left:58px;top:736.50px;font-size:13px;color:#000;font-weight:400;">Декабрь</div>
<div class="t" style="right:698.2px;top:736.50px;font-size:13px;color:#000;font-weight:400;">134</div>
<div class="t" style="right:616.8px;top:736.50px;font-size:13px;color:#000;font-weight:400;">234524</div>
<div class="t" style="left:390.5px;top:296.50px;font-size:13px;color:#000;font-weight:400;">март</div>
<div class="a" style="left:386px;top:291px;width:141px;height:23px;background:transparent;border:2px solid #217346"></div>
<div class="a" style="left:32px;top:760px;width:875px;height:28px;background:#e6e6e6;"></div>
<div class="a" style="left:32px;top:760px;width:856px;height:1px;background:#a0a0a0;"></div>
<div class="a" style="left:891px;top:250px;width:15px;height:496px;background:#dcdcdc;"></div>
<div class="a" style="left:888px;top:253px;width:3px;height:507px;background:#ebebeb;"></div>
<div class="a" style="left:891px;top:236px;width:15px;height:14px;background:#fff;border:1px solid #c6c6c6"></div>
<div class="a" style="left:891px;top:250px;width:15px;height:476px;background:#fff;border:1px solid #a6a6a6"></div>
<div class="a" style="left:891px;top:746px;width:15px;height:14px;background:#fff;border:1px solid #c6c6c6"></div>
<svg style="left:0;top:0" width="939" height="840"><path d="M894.5 245 h8 l-4 -4z" fill="#6d5d6d"/><path d="M894.5 751 h8 l-4 4z" fill="#6d5d6d"/></svg>
<div class="a" style="left:130px;top:760px;width:60px;height:25px;background:#fff;border-left:1px solid #a0a0a0;border-right:1px solid #a0a0a0"></div>
<div class="a" style="left:130px;top:783px;width:60px;height:2px;background:#217346;"></div>
<div class="t" style="left:141.7px;top:768.02px;font-size:12.5px;color:#217346;font-weight:700;letter-spacing:-0.371px;">Лист1</div>
<svg style="left:0;top:0" width="939" height="840"><path d="M61 769 v9 l-4.5 -4.5z" fill="#c2c2c2"/><path d="M86 769 v9 l4.5 -4.5z" fill="#c2c2c2"/><circle cx="231" cy="773.5" r="7.5" fill="none" stroke="#6d5d6d" stroke-width="1.3"/><path d="M227 773.5 h8 M231 769.5 v8" stroke="#6d5d6d" stroke-width="1.4"/><g fill="#9a9a9a"><rect x="557" y="769" width="2" height="2"/><rect x="557" y="773" width="2" height="2"/><rect x="557" y="777" width="2" height="2"/></g></svg>
<div class="a" style="left:589px;top:767px;width:284px;height:15px;background:#dcdcdc;"></div>
<div class="a" style="left:574px;top:767px;width:15px;height:15px;background:#fff;border:1px solid #c6c6c6"></div>
<div class="a" style="left:589px;top:767px;width:255px;height:15px;background:#fff;border:1px solid #a6a6a6"></div>
<div class="a" style="left:873px;top:767px;width:15px;height:15px;background:#fff;border:1px solid #c6c6c6"></div>
<svg style="left:0;top:0" width="939" height="840"><path d="M584 770.5 v8 l-4 -4z" fill="#6d5d6d"/><path d="M878 770.5 v8 l4 -4z" fill="#6d5d6d"/></svg>
<div class="a" style="left:32px;top:788px;width:875px;height:20px;background:#f3f3f3;"></div>
<div class="a" style="left:32px;top:788px;width:875px;height:1px;background:#cdcdcd;"></div>
<div class="t" style="left:38.6px;top:792.54px;font-size:12px;color:#444;font-weight:400;letter-spacing:-0.292px;">Готово</div>
<div class="a" style="left:595px;top:789px;width:40px;height:19px;background:#c6c6c6;"></div>
<svg style="left:0;top:0" width="939" height="840"><g fill="none" stroke="#6d5d6d" stroke-width="1.2"><rect x="608.5" y="792.5" width="12" height="12"/><path d="M608.5 796.5 h12 M608.5 800.5 h12 M612.5 792.5 v12 M616.5 792.5 v12"/><rect x="648.5" y="792.5" width="13" height="12"/><path d="M651.5 795.5 h7 v6.5 h-7z M653 797.5 h4 M653 799.5 h4"/><path d="M688.5 792.5 h13 v12 h-13z M688.5 799.5 h8 v-7 M692.5 792.5 v7"/></g><path d="M721 799.5 h7" stroke="#555" stroke-width="1.2"/><path d="M735 799.5 h99" stroke="#9a9a9a" stroke-width="1"/><rect x="782" y="794" width="5" height="11" fill="#7a6a7a"/><path d="M839 799.5 h8 M843 795.5 v8" stroke="#555" stroke-width="1.2"/></svg>
<div class="t" style="left:860.5px;top:792.84px;font-size:12px;color:#444;font-weight:400;letter-spacing:-1.616px;">100</div>
<div class="t" style="left:880.3px;top:792.84px;font-size:12px;color:#444;font-weight:400;letter-spacing:-1.872px;">%</div>
<div class="a" style="left:479px;top:224px;width:262px;height:56px;background:#fff;border:1px solid #c6c6c6;box-shadow:1px 1px 2px rgba(0,0,0,.12)"></div>
<div class="a" style="left:483px;top:228px;width:64px;height:24px;background:#fff;border:1px solid #c6c6c6"></div>
<div class="a" style="left:547px;top:228px;width:46px;height:24px;background:#fff;border:1px solid #c6c6c6"></div>
<div class="t" style="left:486.4px;top:232.54px;font-size:12px;color:#444;font-weight:400;letter-spacing:-0.119px;">Calibri</div>
<div class="t" style="left:550px;top:232.54px;font-size:12px;color:#444;font-weight:400;letter-spacing:-0.5px;">11</div>
<svg style="left:0;top:0" width="939" height="840"><path d="M537 238 h5 l-2.5 2.6z" fill="#6d5d6d"/><path d="M583 238 h5 l-2.5 2.6z" fill="#6d5d6d"/><path d="M574 262.5 h5 l-2.5 2.6z" fill="#6d5d6d"/><path d="M608 262.5 h5 l-2.5 2.6z" fill="#6d5d6d"/><path d="M642 262.5 h5 l-2.5 2.6z" fill="#6d5d6d"/><path d="M662 238.2 h5 l-2.5 2.6z" fill="#6d5d6d"/><text x="599.5" y="245.6" font-family="Liberation Sans" font-size="14.5" fill="#705e70">A</text><path d="M607 235.5 h5 l-2.5 -2.6z" fill="#3c7fc4"/><text x="622" y="245.6" font-family="Liberation Sans" font-size="12" fill="#705e70">A</text><path d="M629.3 233 h4.8 l-2.4 2.6z" fill="#3c7fc4"/><rect x="640.5" y="232.5" width="15" height="8" fill="#fff" stroke="#3c7fc4" stroke-width="1.6"/><circle cx="648" cy="236.5" r="1.8" fill="#3c7fc4"/><g fill="#f7c46a" stroke="#fff" stroke-width="0.6"><ellipse cx="652" cy="239.5" rx="4" ry="1.6"/><ellipse cx="652" cy="242" rx="4" ry="1.6"/><ellipse cx="647" cy="244" rx="4" ry="1.6"/><ellipse cx="647" cy="246.3" rx="4" ry="1.6"/></g><text x="675.5" y="245.6" font-family="Liberation Sans" font-size="15" fill="#5a4a5a">%</text><text x="696.6" y="243" font-family="Liberation Sans" font-size="9.5" fill="#5a4a5a" letter-spacing="-0.3">000</text><rect x="718.5" y="232.5" width="14" height="14" fill="#fff" stroke="#705e70"/><path d="M719 236.5 h13 M719 242.5 h13 M725.5 233 v3.5 M725.5 242.5 v3.5" stroke="#705e70"/><path d="M720.5 239.5 h10 M722.5 237.8 l-2 1.7 l2 1.7 M728.5 237.8 l2 1.7 l-2 1.7" fill="none" stroke="#3c7fc4"/><text x="487.5" y="267.7" font-family="Liberation Sans" font-weight="700" font-size="13" fill="#5a4a5a">Ж</text><text x="510.5" y="267.7" font-family="Liberation Sans" font-weight="700" font-style="italic" font-size="12.5" fill="#5a4a5a">К</text><path d="M531 259.5 h14 M533 262.5 h10 M531 265.5 h14 M533 268.5 h10" stroke="#705e70" stroke-width="1"/><path d="M554.5 263.3 L560.5 258 L565.5 262.6 L559.5 267.8z" fill="#fff" stroke="#705e70" stroke-width="1.1"/><path d="M557 260.5 V257 a1.7 1.7 0 0 1 3.4 0 V261.8" fill="none" stroke="#705e70" stroke-width="1.1"/><path d="M565 261 q3.5 1.5 3 4 q-0.5 2 -2.5 2.8z" fill="#3c7fc4"/><rect x="552" y="268" width="16" height="3.8" fill="#f7c46a"/><text x="586.5" y="267" font-family="Liberation Sans" font-size="15" fill="#705e70" transform="translate(586.5 267) scale(1.05 1) translate(-586.5 -267)">A</text><rect x="586" y="268" width="16" height="3.5" fill="#f00"/><path d="M621 257.5 h13 M621 263.5 h13 M621 257.5 v12 M627.5 257.5 v12 M634 257.5 v12" stroke="#9c9c9c" stroke-dasharray="1 1" fill="none"/><path d="M620.5 269.5 h14" stroke="#705e70" stroke-width="1.2"/><path d="M654.5 260.5 h6 M656.5 258.5 l-2 2 l2 2" fill="none" stroke="#3c7fc4" stroke-width="1.2"/><text x="661" y="264" font-family="Liberation Sans" font-size="8.5" fill="#705e70">0</text><text x="654" y="270.5" font-family="Liberation Sans" font-size="8.5" fill="#705e70">,00</text><text x="676" y="264" font-family="Liberation Sans" font-size="8.5" fill="#705e70">,00</text><text x="683" y="270.5" font-family="Liberation Sans" font-size="8.5" fill="#705e70">,0</text><path d="M676 266.5 h6 M680 264.5 l2 2 l-2 2" fill="none" stroke="#3c7fc4" stroke-width="1.2"/><path d="M698 263.3 L702.5 261.5 L709 267.5 L706.5 270 L705 271.5 L704.5 270 L702 267.5z" fill="#f7c46a"/><path d="M704 260.8 L706.8 258.3 L712 263.5 L709.3 266z" fill="#705e70"/><path d="M709.8 258.3 L712.3 256 L714.3 258.5 L711.8 261z" fill="#705e70"/></svg>
<div class="a" style="left:481px;top:297px;width:316px;height:452px;background:rgba(0,0,0,0.07);filter:blur(1.5px)"></div>
<div class="a" style="left:479px;top:295px;width:316px;height:452px;background:#fff;border:1px solid #c6c6c6"></div>
<div class="a" style="left:505px;top:345px;width:288px;height:22px;background:#e9e9e9;"></div>
<div class="t" style="left:513.5px;top:304.07px;font-size:11.5px;color:#3b3b3b;font-weight:400;letter-spacing:-0.251px;text-decoration-thickness:1px;text-underline-offset:1px;text-decoration-color:#555;">В<u>ы</u>резать</div>
<div class="t" style="left:513.5px;top:327.87px;font-size:11.5px;color:#3b3b3b;font-weight:400;letter-spacing:0.218px;text-decoration-thickness:1px;text-underline-offset:1px;text-decoration-color:#555;"><u>К</u>опировать</div>
<div class="t" style="left:513.5px;top:404.17px;font-size:11.5px;color:#a6a6a6;font-weight:400;letter-spacing:-0.008px;text-decoration-thickness:1px;text-underline-offset:1px;text-decoration-color:#555;">Специальная <u>в</u>ставка...</div>
<div class="t" style="left:513.5px;top:429.77px;font-size:11.5px;color:#3b3b3b;font-weight:400;letter-spacing:0.322px;text-decoration-thickness:1px;text-underline-offset:1px;text-decoration-color:#555;"><u>И</u>нтеллектуальный поиск</div>
<div class="t" style="left:513.5px;top:456.37px;font-size:11.5px;color:#3b3b3b;font-weight:400;letter-spacing:-0.176px;text-decoration-thickness:1px;text-underline-offset:1px;text-decoration-color:#555;">Вста<u>в</u>ить...</div>
<div class="t" style="left:513.5px;top:480.27px;font-size:11.5px;color:#3b3b3b;font-weight:400;letter-spacing:-0.080px;text-decoration-thickness:1px;text-underline-offset:1px;text-decoration-color:#555;"><u>У</u>далить...</div>
<div class="t" style="left:513.5px;top:504.07px;font-size:11.5px;color:#3b3b3b;font-weight:400;letter-spacing:0.283px;text-decoration-thickness:1px;text-underline-offset:1px;text-decoration-color:#555;">Очистить содер<u>ж</u>имое</div>
<div class="t" style="left:513.5px;top:530.27px;font-size:11.5px;color:#a6a6a6;font-weight:400;letter-spacing:0.200px;text-decoration-thickness:1px;text-underline-offset:1px;text-decoration-color:#555;">Экспресс-анали<u>з</u></div>
<div class="t" style="left:513.5px;top:554.37px;font-size:11.5px;color:#3b3b3b;font-weight:400;letter-spacing:0.392px;text-decoration-thickness:1px;text-underline-offset:1px;text-decoration-color:#555;"><u>Ф</u>ильтр</div>
<div class="t" style="left:513.5px;top:578.27px;font-size:11.5px;color:#3b3b3b;font-weight:400;letter-spacing:0.219px;text-decoration-thickness:1px;text-underline-offset:1px;text-decoration-color:#555;"><u>С</u>ортировка</div>
<div class="t" style="left:513.5px;top:603.47px;font-size:11.5px;color:#3b3b3b;font-weight:400;letter-spacing:0.173px;text-decoration-thickness:1px;text-underline-offset:1px;text-decoration-color:#555;"><u>П</u>олучить данные из таблицы или диапазона...</div>
<div class="t" style="left:513.5px;top:629.67px;font-size:11.5px;color:#3b3b3b;font-weight:400;letter-spacing:0.194px;text-decoration-thickness:1px;text-underline-offset:1px;text-decoration-color:#555;">Вставить приме<u>ч</u>ание</div>
<div class="t" style="left:513.5px;top:656.27px;font-size:11.5px;color:#3b3b3b;font-weight:400;letter-spacing:0.165px;text-decoration-thickness:1px;text-underline-offset:1px;text-decoration-color:#555;">Формат <u>я</u>чеек...</div>
<div class="t" style="left:513.5px;top:680.07px;font-size:11.5px;color:#3b3b3b;font-weight:400;letter-spacing:0.248px;text-decoration-thickness:1px;text-underline-offset:1px;text-decoration-color:#555;">Вы<u>б</u>рать из раскрывающегося списка...</div>
<div class="t" style="left:513.5px;top:703.27px;font-size:11.5px;color:#3b3b3b;font-weight:400;letter-spacing:0.236px;text-decoration-thickness:1px;text-underline-offset:1px;text-decoration-color:#555;">Присвои<u>т</u>ь имя...</div>
<div class="t" style="left:513.5px;top:727.87px;font-size:11.5px;color:#3b3b3b;font-weight:400;letter-spacing:0.196px;text-decoration-thickness:1px;text-underline-offset:1px;text-decoration-color:#555;">Сс<u>ы</u>лка</div>
<div class="t" style="left:514.6px;top:350.04px;font-size:12px;color:#444;font-weight:700;letter-spacing:-0.291px;">Параметры вставки:</div>
<div class="a" style="left:513px;top:421px;width:280px;height:1px;background:#dcdcdc;"></div>
<div class="a" style="left:513px;top:447px;width:280px;height:1px;background:#dcdcdc;"></div>
<div class="a" style="left:513px;top:521px;width:280px;height:1px;background:#dcdcdc;"></div>
<div class="a" style="left:513px;top:595px;width:280px;height:1px;background:#dcdcdc;"></div>
<div class="a" style="left:513px;top:621px;width:280px;height:1px;background:#dcdcdc;"></div>
<div class="a" style="left:513px;top:647px;width:280px;height:1px;background:#dcdcdc;"></div>
<svg style="left:0;top:0" width="939" height="840"><path d="M780 554.8 v7.2 l4.2 -3.6z M780 578.9 v7.2 l4.2 -3.6z" fill="#705e70"/><path d="M488.5 301.5 L495 311 M497.5 301.5 L491 311" stroke="#705e70" stroke-width="1.7"/><circle cx="488.8" cy="313.3" r="2.6" fill="#fff" stroke="#3c7fc4" stroke-width="1.3"/><circle cx="497.2" cy="313.3" r="2.6" fill="#fff" stroke="#3c7fc4" stroke-width="1.3"/><path d="M490 336.5 H485.5 V325.5 H490 L492 327.5" fill="none" stroke="#705e70"/><path d="M487 328.5h3 M487 331h3 M487 333.5h3" stroke="#3c7fc4"/><path d="M491.5 339.5 V328.5 H497 L500 331.5 V339.5z" fill="#fff" stroke="#705e70"/><path d="M493 332.5h3 M493 334.5h5 M493 336.5h5" stroke="#3c7fc4"/><rect x="486.5" y="350.5" width="10" height="13" fill="#e2e2e2" stroke="#cfcfcf"/><rect x="489" y="348.5" width="5" height="3" fill="#bdbdbd"/><path d="M493.5 364 V356.5 H498 L500.5 359 V364z" fill="#fff" stroke="#a8a8a8"/><rect x="511.5" y="374.5" width="14" height="18" fill="#e0e0e0" stroke="#d0d0d0"/><rect x="515" y="371.5" width="7" height="4" fill="#bdbdbd"/><path d="M521.5 393.5 V381.5 H528 L531.5 385 V393.5z" fill="#fff" stroke="#a8a8a8"/><circle cx="494.5" cy="433.5" r="5.3" fill="#fff" stroke="#3c7fc4" stroke-width="1.7"/><path d="M490.7 437.5 L486 442" stroke="#3c7fc4" stroke-width="2.2"/><rect x="494" y="433" width="1.6" height="3.6" fill="#705e70"/><rect x="494" y="430.5" width="1.6" height="1.5" fill="#705e70"/><rect x="489.5" y="530.5" width="10" height="11" fill="#fff" stroke="#bdbdbd"/><path d="M491.5 535.5h6 M491.5 538h6" stroke="#bdbdbd"/><path d="M489 527 l-3.5 5 h2.5 l-2 4 l5 -5.5 h-2.5 l2 -3.5z" fill="#c8c8c8"/><rect x="485.5" y="601.5" width="15" height="15" fill="#fff" stroke="#705e70"/><rect x="485" y="601" width="16" height="3.5" fill="#3c7fc4"/><path d="M486 608.5h14 M486 612.5h14 M490.5 604.5v12 M495.5 604.5v12" stroke="#a9a9a9"/><path d="M487 602.8h2 M492 602.8h2 M497 602.8h2" stroke="#fff"/><path d="M492 628.5 H498 a1.5 1.5 0 0 1 1.5 1.5 V635.5 a1.5 1.5 0 0 1 -1.5 1.5 H492.5 L489.5 641 V637 H488 a1.5 1.5 0 0 1 -1.5 -1.5 V634" fill="none" stroke="#705e70" stroke-width="1.1"/><path d="M485 630 h6 M488 627 v6" stroke="#3c7fc4" stroke-width="2"/><rect x="485.5" y="653.5" width="14" height="15" fill="#fff" stroke="#705e70"/><rect x="485" y="653" width="15" height="2.5" fill="#3c7fc4"/><circle cx="489" cy="660" r="1.3" fill="#705e70"/><circle cx="489" cy="664.5" r="1.2" fill="none" stroke="#705e70" stroke-width="0.8"/><path d="M491.5 660h5 M491.5 664.5h5" stroke="#705e70"/><path d="M486 733 a5.5 5.5 0 0 1 11 0" fill="none" stroke="#705e70" stroke-width="1.1"/><path d="M487 729.8 h9 M487.5 732.5 h8 M489.2 733 V730 q2.3 -5.5 4.6 0 V733" fill="none" stroke="#705e70" stroke-width="1"/><path d="M492 735 H488 q-1.5 0 -1.5 1.5 V738.5 q0 1.5 1.5 1.5 H491.5 M494.5 735 H499 q1.5 0 1.5 1.5 V738.5 q0 1.5 -1.5 1.5 H495 M491 740 L496 735" fill="none" stroke="#3c7fc4" stroke-width="1.8"/></svg>
<div class="a" style="left:487.5px;top:470.5px;width:142px;height:28.2px;background:transparent;border:4px solid #ff0000;border-radius:9.5px;box-shadow:1px 3px 4px rgba(0,0,0,.38), inset 2px 2px 3px rgba(0,0,0,.32)"></div>
</body></html>
